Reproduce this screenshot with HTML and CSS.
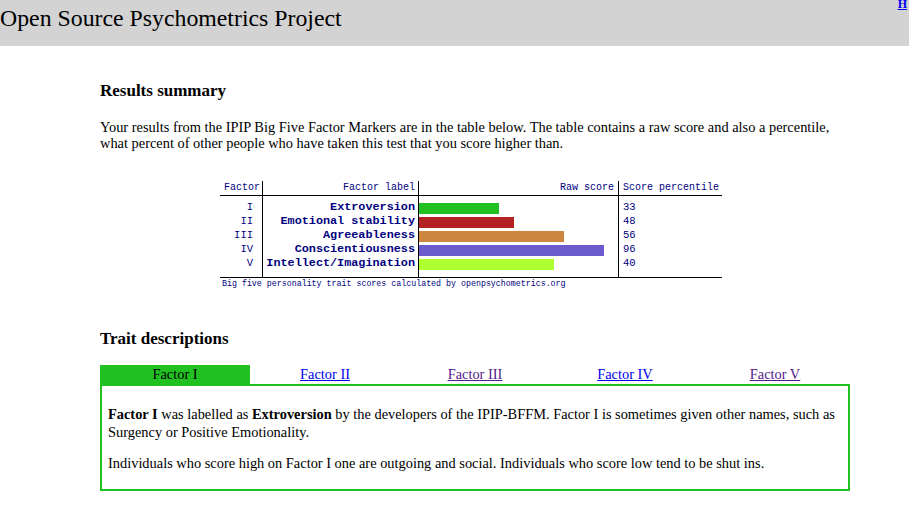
FILE: index.html
```html
<!DOCTYPE html>
<html>
<head>
<meta charset="utf-8">
<link rel="stylesheet" href="styles.css">
</head>
<body>
<div class="header">
  <div class="site-title">Open Source Psychometrics Project</div>
  <a class="home-link" href="#">H</a>
</div>
<div class="main">
  <h3 class="section-title">Results summary</h3>
  <p class="intro">Your results from the IPIP Big Five Factor Markers are in the table below. The table contains a raw score and also a percentile, what percent of other people who have taken this test that you score higher than.</p>

  <div class="chart">
    <div class="chart-grid">
      <div class="col col-factor">
        <div class="col-head">Factor</div>
        <div class="col-body">
          <div class="row">I</div>
          <div class="row">II</div>
          <div class="row">III</div>
          <div class="row">IV</div>
          <div class="row">V</div>
        </div>
      </div>
      <div class="col col-label">
        <div class="col-head">Factor label</div>
        <div class="col-body">
          <div class="row">Extroversion</div>
          <div class="row">Emotional stability</div>
          <div class="row">Agreeableness</div>
          <div class="row">Conscientiousness</div>
          <div class="row">Intellect/Imagination</div>
        </div>
      </div>
      <div class="col col-raw">
        <div class="col-head">Raw score</div>
        <div class="col-body">
          <div class="row"><span class="bar bar-1" style="width:80px"></span></div>
          <div class="row"><span class="bar bar-2" style="width:95px"></span></div>
          <div class="row"><span class="bar bar-3" style="width:145px"></span></div>
          <div class="row"><span class="bar bar-4" style="width:185px"></span></div>
          <div class="row"><span class="bar bar-5" style="width:135px"></span></div>
        </div>
      </div>
      <div class="col col-pct">
        <div class="col-head">Score percentile</div>
        <div class="col-body">
          <div class="row">33</div>
          <div class="row">48</div>
          <div class="row">56</div>
          <div class="row">96</div>
          <div class="row">40</div>
        </div>
      </div>
    </div>
    <div class="chart-caption">Big five personality trait scores calculated by openpsychometrics.org</div>
  </div>

  <h3 class="section-title trait-title">Trait descriptions</h3>
  <div class="tabs">
    <div class="tab tab-active">Factor I</div>
    <div class="tab"><a class="link" href="#">Factor II</a></div>
    <div class="tab"><a class="link visited" href="#">Factor III</a></div>
    <div class="tab"><a class="link" href="#">Factor IV</a></div>
    <div class="tab"><a class="link visited" href="#">Factor V</a></div>
  </div>
  <div class="tab-panel">
    <p><b>Factor I</b> was labelled as <b>Extroversion</b> by the developers of the IPIP-BFFM. Factor I is sometimes given other names, such as Surgency or Positive Emotionality.</p>
    <p>Individuals who score high on Factor I one are outgoing and social. Individuals who score low tend to be shut ins.</p>
  </div>
</div>
</body>
</html>
```
FILE: styles.css
```css
html, body {
  margin: 0;
  padding: 0;
  background: #fff;
}
body {
  font-family: "Liberation Serif", "Times New Roman", serif;
  color: #000;
  position: relative;
}
.header {
  background: #d3d3d3;
  height: 46px;
  box-sizing: border-box;
  padding-top: 5px;
}
.site-title {
  font-size: 23.8px;
  line-height: 27px;
}
.home-link {
  position: absolute;
  top: -3px;
  right: 2px;
  font-size: 12px;
  font-weight: bold;
  color: #0000ee;
}
.main {
  margin-left: 100px;
  width: 750px;
}
.section-title {
  font-size: 17px;
  font-weight: bold;
  margin: 34px 0 0 0;
  line-height: 21px;
}
.intro {
  font-size: 14.4px;
  line-height: 16px;
  margin: 18px 0 0 0;
}
.chart {
  margin: 30px 0 0 120px;
  width: 502px;
  color: #000080;
  font-family: "Liberation Mono", "DejaVu Sans Mono", monospace;
}
.chart-grid {
  display: flex;
  border-bottom: 1px solid #000;
}
.col {
  display: flex;
  flex-direction: column;
  box-sizing: border-box;
}
.col-factor { width: 43px; border-right: 1px solid #000; }
.col-label { width: 156px; border-right: 1px solid #000; }
.col-raw { width: 200px; border-right: 1px solid #000; }
.col-pct { width: 103px; }
.col-head {
  height: 14px;
  font-size: 10px;
  line-height: 14px;
  border-bottom: 1px solid #000;
  white-space: nowrap;
}
.col-body {
  padding: 4px 0 7px 0;
}
.row {
  height: 14px;
  line-height: 14px;
  font-size: 10.5px;
  white-space: nowrap;
  display: flex;
  align-items: center;
}
.col-factor .col-head, .col-factor .row {
  justify-content: flex-end;
  text-align: right;
}
.col-factor .col-head { padding-right: 2px; }
.col-factor .row { padding-right: 9px; }
.col-label .col-head, .col-label .row {
  justify-content: flex-end;
  text-align: right;
  padding-right: 3px;
}
.col-label .row {
  font-size: 11.8px;
  font-weight: bold;
}
.col-raw .col-head {
  text-align: right;
  padding-right: 4px;
}
.col-raw .row { align-items: flex-start; }
.bar {
  display: block;
  height: 11px;
  margin-top: 3px;
}
.bar-1 { background: #22c122; }
.bar-2 { background: #b22222; }
.bar-3 { background: #cd853f; }
.bar-4 { background: #6a5acd; }
.bar-5 { background: #adff2f; }
.col-pct .col-head, .col-pct .row { padding-left: 4px; }
.chart-caption {
  font-size: 8.3px;
  line-height: 12px;
  padding-left: 2px;
  white-space: nowrap;
}
.trait-title {
  margin-top: 38px;
}
.tabs {
  display: flex;
  margin-top: 16px;
}
.tab {
  width: 150px;
  height: 19px;
  line-height: 19px;
  text-align: center;
  font-size: 14.4px;
}
.tab-active {
  background: #22c122;
}
.link { color: #0000ee; }
.link.visited { color: #551a8b; }
.tab-panel {
  border: 2px solid #22c122;
  padding: 6px 6px 4px;
  font-size: 14.4px;
}
.tab-panel p {
  margin: 13px 0;
  line-height: 18px;
}
```
